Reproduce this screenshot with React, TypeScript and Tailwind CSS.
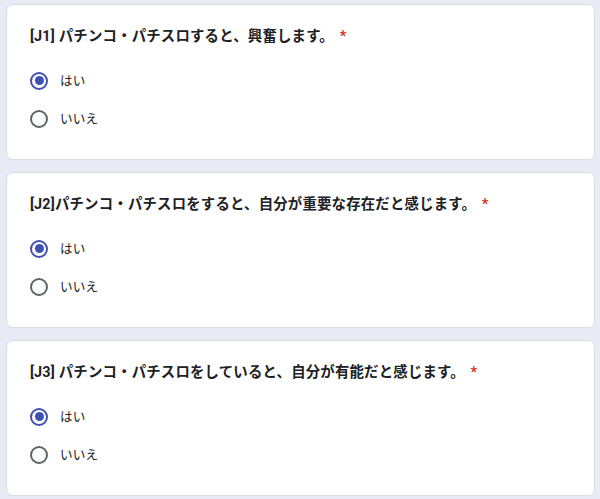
const questions = [
  { id: 'q1', title: '[J1] パチンコ・パチスロすると、興奮します。' },
  { id: 'q2', title: '[J2]パチンコ・パチスロをすると、自分が重要な存在だと感じます。' },
  { id: 'q3', title: '[J3] パチンコ・パチスロをしていると、自分が有能だと感じます。' },
]

function Radio({ checked }: { checked: boolean }) {
  return (
    <span
      className={`flex h-[18px] w-[18px] items-center justify-center rounded-full border-2 ${
        checked ? 'border-[#3f51b5]' : 'border-[#5f6368]'
      }`}
    >
      {checked && <span className="h-[9px] w-[9px] rounded-full bg-[#3f51b5]" />}
    </span>
  )
}

export default function App() {
  return (
    <div
      className="min-h-screen bg-[#e8eaf6] pt-[4px]"
      style={{ fontFamily: 'Roboto, "Noto Sans CJK JP", sans-serif' }}
    >
      <div className="ml-[6px] flex w-[589px] flex-col gap-[12px]">
        {questions.map((q) => (
          <div
            key={q.id}
            className="rounded-[7px] border border-[#dadce0] bg-white px-[23px] pb-[21px] pt-[21px]"
          >
            <div className="text-[14.4px] font-bold leading-[21.6px] tracking-[0.2px] text-[#202124]">
              {q.title}{' '}
              <span className="pl-[2px] text-[#d93025]">*</span>
            </div>
            <div className="mt-[14.4px] flex flex-col">
              {['はい', 'いいえ'].map((label, i) => (
                <label key={label} className="flex h-[38px] items-center gap-[12px]">
                  <Radio checked={i === 0} />
                  <span className="text-[12.6px] tracking-[0.2px] text-[#202124]">{label}</span>
                </label>
              ))}
            </div>
          </div>
        ))}
      </div>
    </div>
  )
}
